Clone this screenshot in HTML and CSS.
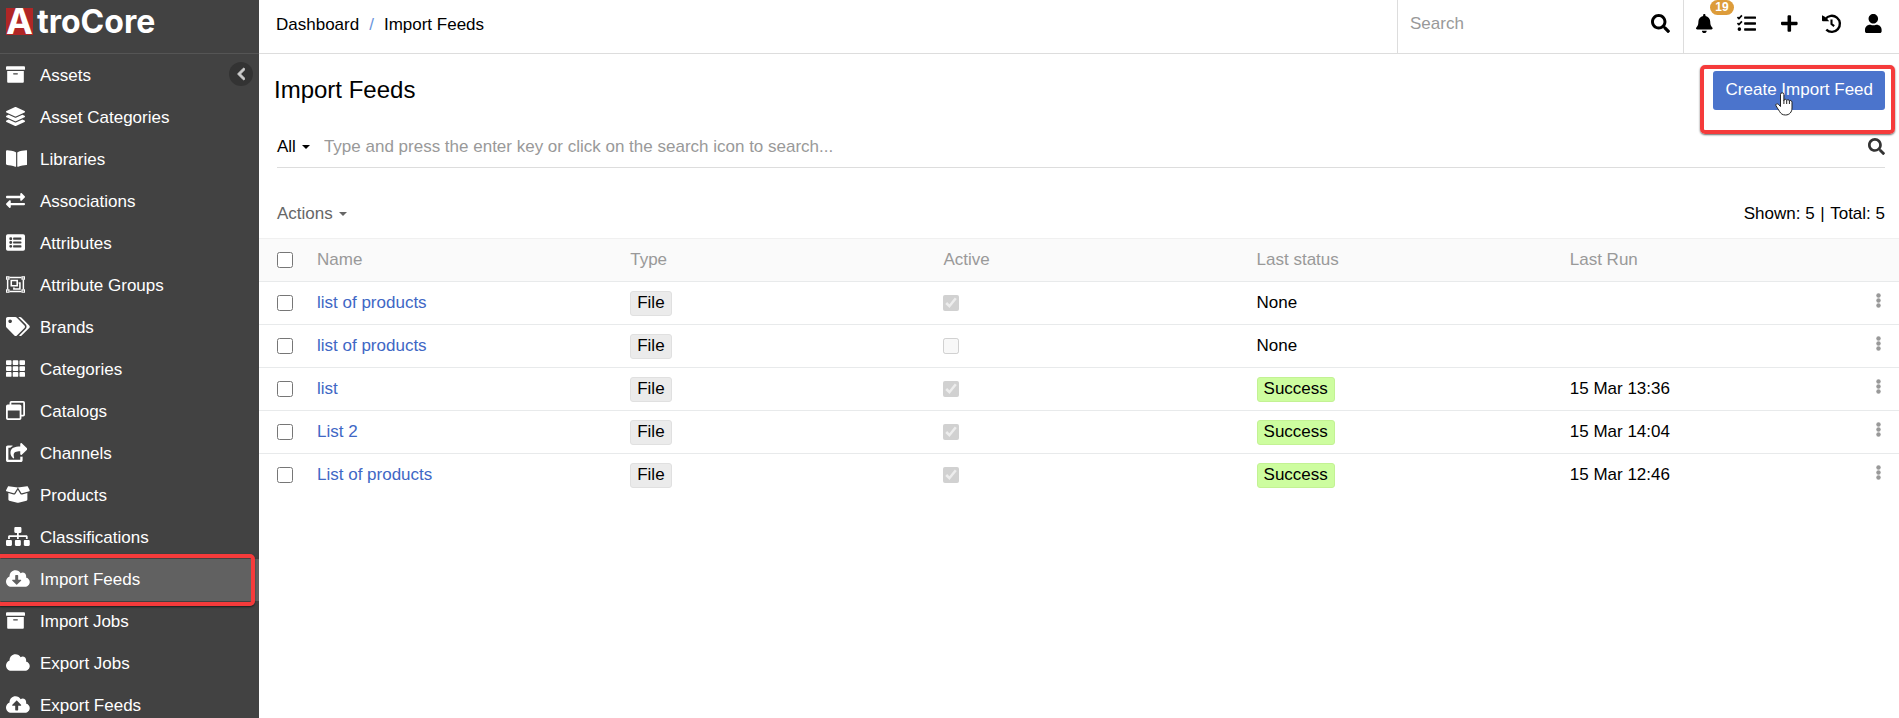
FILE: index.html
```html
<!DOCTYPE html>
<html lang="en">
<head>
    <meta charset="UTF-8">
    <meta name="viewport" content="width=device-width, initial-scale=1.0">
    <title>Import Feeds</title>
    <link rel="stylesheet" href="styles.css">
</head>
<body>
    <aside class="sidebar">
        <a class="logo" href="#"><span class="logo-mark">A</span><span class="logo-name">troCore</span></a>
        <button type="button" class="collapse" aria-label="Collapse menu">
            <svg viewBox="0 0 320 512"><path d="M34.52 239.03L228.87 44.69c9.37-9.37 24.57-9.37 33.94 0l22.67 22.67c9.36 9.36 9.37 24.52.04 33.9L131.49 256l154.02 154.75c9.34 9.38 9.32 24.54-.04 33.9l-22.67 22.67c-9.37 9.37-24.57 9.37-33.94 0L34.52 272.97c-9.37-9.37-9.37-24.57 0-33.94z"/></svg>
        </button>
        <nav class="menu">
            <a href="#"><span class="icon"><svg viewBox="0 0 512 512"><path d="M32 448c0 17.7 14.3 32 32 32h384c17.7 0 32-14.3 32-32V160H32v288zm160-212c0-6.6 5.4-12 12-12h104c6.6 0 12 5.4 12 12v8c0 6.6-5.4 12-12 12H204c-6.6 0-12-5.4-12-12v-8zM480 32H32C14.3 32 0 46.3 0 64v48c0 8.8 7.2 16 16 16h480c8.8 0 16-7.2 16-16V64c0-17.7-14.3-32-32-32z"/></svg></span>Assets</a>
            <a href="#"><span class="icon"><svg viewBox="0 0 512 512"><path d="M12.41 148.02l232.94 105.67c6.8 3.09 14.49 3.09 21.29 0l232.94-105.67c16.55-7.51 16.55-32.52 0-40.03L266.65 2.31a25.607 25.607 0 0 0-21.29 0L12.41 107.98c-16.55 7.51-16.55 32.53 0 40.04zm487.18 88.28l-58.09-26.33-161.64 73.27c-7.56 3.43-15.59 5.17-23.86 5.17s-16.29-1.74-23.86-5.17L70.51 209.97l-58.1 26.33c-16.55 7.5-16.55 32.5 0 40l232.94 105.59c6.8 3.08 14.49 3.08 21.29 0L499.59 276.3c16.55-7.5 16.55-32.5 0-40zm0 127.8l-57.87-26.23-161.86 73.37c-7.56 3.43-15.59 5.17-23.86 5.17s-16.29-1.74-23.86-5.17L70.29 337.87 12.41 364.1c-16.55 7.5-16.55 32.5 0 40l232.94 105.59c6.8 3.08 14.49 3.08 21.29 0L499.59 404.1c16.55-7.5 16.55-32.5 0-40z"/></svg></span>Asset Categories</a>
            <a href="#"><span class="icon"><svg viewBox="0 0 576 512"><path d="M542.22 32.05c-54.8 3.11-163.72 14.43-230.96 55.59-4.64 2.84-7.27 7.89-7.27 13.17v363.87c0 11.55 12.63 18.85 23.28 13.49 69.18-34.82 169.23-44.32 218.7-46.92 16.89-.89 30.02-14.43 30.02-30.66V62.75c.01-17.71-15.35-31.74-33.77-30.7zM264.73 87.64C197.5 46.48 88.58 35.17 33.78 32.05 15.36 31.01 0 45.04 0 62.75V400.6c0 16.24 13.13 29.78 30.02 30.66 49.49 2.6 149.59 12.11 218.77 46.95 10.62 5.35 23.21-1.94 23.21-13.46V100.63c0-5.29-2.62-10.14-7.27-12.99z"/></svg></span>Libraries</a>
            <a href="#"><span class="icon"><svg viewBox="0 0 512 512"><path d="M0 168v-16c0-13.255 10.745-24 24-24h360V80c0-21.367 25.899-32.042 40.971-16.971l80 80c9.372 9.373 9.372 24.569 0 33.941l-80 80C409.956 271.982 384 261.456 384 240v-48H24c-13.255 0-24-10.745-24-24zm488 152H128v-48c0-21.314-25.862-32.08-40.971-16.971l-80 80c-9.372 9.373-9.372 24.569 0 33.941l80 80C102.057 463.997 128 453.437 128 432v-48h360c13.255 0 24-10.745 24-24v-16c0-13.255-10.745-24-24-24z"/></svg></span>Associations</a>
            <a href="#"><span class="icon"><svg viewBox="0 0 512 512"><path fill-rule="evenodd" d="M48 32h416a48 48 0 0 1 48 48v352a48 48 0 0 1-48 48H48a48 48 0 0 1-48-48V80a48 48 0 0 1 48-48zM128 112a40 40 0 1 0 0 80a40 40 0 1 0 0-80zM128 216a40 40 0 1 0 0 80a40 40 0 1 0 0-80zM128 320a40 40 0 1 0 0 80a40 40 0 1 0 0-80zM204 124h200a12 12 0 0 1 12 12v32a12 12 0 0 1-12 12H204a12 12 0 0 1-12-12v-32a12 12 0 0 1 12-12zM204 228h200a12 12 0 0 1 12 12v32a12 12 0 0 1-12 12H204a12 12 0 0 1-12-12v-32a12 12 0 0 1 12-12zM204 332h200a12 12 0 0 1 12 12v32a12 12 0 0 1-12 12H204a12 12 0 0 1-12-12v-32a12 12 0 0 1 12-12z"/></svg></span>Attributes</a>
            <a href="#"><span class="icon"><svg viewBox="0 0 512 512"><path class="line" stroke-width="40" d="M96 68h320M96 444h320M44 128v256M468 128v256"/><path class="line" stroke-width="32" d="M16 48h64v64H16zM432 48h64v64h-64zM16 400h64v64H16zM432 400h64v64h-64z"/><path class="line" stroke-width="42" d="M142 148h160v144H142z"/><path d="M340 192h56v208H192v-66h42v24h120V234h-14z"/></svg></span>Attribute Groups</a>
            <a href="#"><span class="icon"><svg viewBox="0 0 640 512"><path d="M497.941 225.941L286.059 14.059A48 48 0 0 0 252.118 0H48C21.49 0 0 21.49 0 48v204.118a48 48 0 0 0 14.059 33.941l211.882 211.882c18.744 18.745 49.136 18.746 67.882 0l204.118-204.118c18.745-18.745 18.745-49.137 0-67.882zM112 160c-26.51 0-48-21.49-48-48s21.49-48 48-48 48 21.49 48 48-21.49 48-48 48zm513.941 133.823L421.823 497.941c-18.745 18.745-49.137 18.745-67.882 0l-.36-.36L527.64 323.522c16.999-16.999 26.36-39.6 26.36-63.64s-9.362-46.641-26.36-63.64L331.397 0h48.721a48 48 0 0 1 33.941 14.059l211.882 211.882c18.745 18.745 18.745 49.137 0 67.882z"/></svg></span>Brands</a>
            <a href="#"><span class="icon"><svg viewBox="0 0 512 512"><path d="M24 32h101a24 24 0 0 1 24 24v80a24 24 0 0 1-24 24H24a24 24 0 0 1-24-24V56a24 24 0 0 1 24-24zM205 32h102a24 24 0 0 1 24 24v80a24 24 0 0 1-24 24H205a24 24 0 0 1-24-24V56a24 24 0 0 1 24-24zM387 32h101a24 24 0 0 1 24 24v80a24 24 0 0 1-24 24H387a24 24 0 0 1-24-24V56a24 24 0 0 1 24-24zM24 192h101a24 24 0 0 1 24 24v80a24 24 0 0 1-24 24H24a24 24 0 0 1-24-24v-80a24 24 0 0 1 24-24zM205 192h102a24 24 0 0 1 24 24v80a24 24 0 0 1-24 24H205a24 24 0 0 1-24-24v-80a24 24 0 0 1 24-24zM387 192h101a24 24 0 0 1 24 24v80a24 24 0 0 1-24 24H387a24 24 0 0 1-24-24v-80a24 24 0 0 1 24-24zM24 352h101a24 24 0 0 1 24 24v80a24 24 0 0 1-24 24H24a24 24 0 0 1-24-24v-80a24 24 0 0 1 24-24zM205 352h102a24 24 0 0 1 24 24v80a24 24 0 0 1-24 24H205a24 24 0 0 1-24-24v-80a24 24 0 0 1 24-24zM387 352h101a24 24 0 0 1 24 24v80a24 24 0 0 1-24 24H387a24 24 0 0 1-24-24v-80a24 24 0 0 1 24-24z"/></svg></span>Categories</a>
            <a href="#"><span class="icon"><svg viewBox="0 0 512 512"><path fill-rule="evenodd" d="M144 0h320a48 48 0 0 1 48 48v320a48 48 0 0 1-48 48h-48v-48h48V48H144v48H96V48a48 48 0 0 1 48-48zM48 96h320a48 48 0 0 1 48 48v320a48 48 0 0 1-48 48H48a48 48 0 0 1-48-48V144a48 48 0 0 1 48-48zM48 256v208h320V256z"/></svg></span>Catalogs</a>
            <a href="#"><span class="icon"><svg viewBox="0 0 576 512"><path d="M568.482 177.448L424.479 313.433C409.3 327.768 384 317.14 384 295.985v-71.963c-144.575.97-205.566 35.113-164.775 171.353 4.483 14.973-12.846 26.567-25.006 17.33C155.252 383.105 120 326.488 120 269.339c0-143.937 117.599-172.5 264-173.312V24.012c0-21.174 25.317-31.768 40.479-17.448l144.003 135.988c10.02 9.463 10.028 25.425 0 34.896zM384 379.128V448H64V128h50.916a11.99 11.99 0 0 0 8.648-3.693c14.953-15.568 32.237-27.89 51.014-37.676C185.708 80.83 181.584 64 169.033 64H48C21.49 64 0 85.49 0 112v352c0 26.51 21.49 48 48 48h352c26.51 0 48-21.49 48-48v-88.806c0-8.288-8.197-14.066-16.011-11.302a71.83 71.83 0 0 1-34.189 3.377c-7.27-1.046-13.8 4.514-13.8 11.859z"/></svg></span>Channels</a>
            <a href="#"><span class="icon"><svg viewBox="0 0 640 512"><path d="M425.7 256c-16.9 0-32.8-9-41.4-23.4L320 126l-64.2 106.6c-8.7 14.5-24.6 23.5-41.5 23.5-4.5 0-9-.6-13.3-1.9L64 215v178c0 14.7 10 27.5 24.2 31l216.2 54.1c10.2 2.5 20.9 2.5 31 0L551.8 424c14.2-3.6 24.2-16.4 24.2-31V215l-137 39.1c-4.3 1.3-8.8 1.9-13.3 1.9zm212.6-112.2L586.8 41c-3.1-6.2-9.8-9.8-16.7-8.9L320 64l91.7 152.1c3.8 6.3 11.4 9.3 18.5 7.3l197.9-56.5c9.9-2.9 14.7-13.9 10.2-23.1zM53.2 41L1.7 143.8c-4.6 9.2.3 20.2 10.1 23l197.9 56.5c7.1 2 14.7-1 18.5-7.3L320 64 69.8 32.1c-6.9-.8-13.5 2.7-16.6 8.9z"/></svg></span>Products</a>
            <a href="#"><span class="icon"><svg viewBox="0 0 640 512"><path d="M128 352H32c-17.67 0-32 14.33-32 32v96c0 17.67 14.33 32 32 32h96c17.67 0 32-14.33 32-32v-96c0-17.67-14.33-32-32-32zm-24-80h192v48h48v-48h192v48h48v-57.59c0-21.17-17.23-38.41-38.41-38.41H344v-64h40c17.67 0 32-14.33 32-32V32c0-17.67-14.33-32-32-32H256c-17.67 0-32 14.33-32 32v96c0 17.67 14.33 32 32 32h40v64H94.41C73.23 224 56 241.23 56 262.41V320h48v-48zm264 80h-96c-17.67 0-32 14.33-32 32v96c0 17.67 14.33 32 32 32h96c17.67 0 32-14.33 32-32v-96c0-17.67-14.33-32-32-32zm240 0h-96c-17.67 0-32 14.33-32 32v96c0 17.67 14.33 32 32 32h96c17.67 0 32-14.33 32-32v-96c0-17.67-14.33-32-32-32z"/></svg></span>Classifications</a>
            <a href="#" class="active"><span class="icon"><svg viewBox="0 0 640 512"><path fill-rule="evenodd" d="M537.6 226.6c4.1-10.7 6.4-22.4 6.4-34.6 0-53-43-96-96-96-19.7 0-38.1 6-53.3 16.2C367 64.2 315.3 32 256 32c-88.4 0-160 71.6-160 160 0 2.7.1 5.4.2 8.1C40.2 219.8 0 273.2 0 336c0 79.5 64.5 144 144 144h368c70.7 0 128-57.3 128-128 0-61.9-44-113.6-102.4-125.4zm-132.9 88.7L299.3 420.7c-6.2 6.2-16.4 6.2-22.6 0L171.3 315.3c-10.1-10.1-2.9-27.3 11.3-27.3H248V176c0-8.8 7.2-16 16-16h48c8.8 0 16 7.2 16 16v112h65.4c14.2 0 21.4 17.2 11.3 27.3z"/></svg></span>Import Feeds<span class="highlight"></span></a>
            <a href="#"><span class="icon"><svg viewBox="0 0 512 512"><path d="M32 448c0 17.7 14.3 32 32 32h384c17.7 0 32-14.3 32-32V160H32v288zm160-212c0-6.6 5.4-12 12-12h104c6.6 0 12 5.4 12 12v8c0 6.6-5.4 12-12 12H204c-6.6 0-12-5.4-12-12v-8zM480 32H32C14.3 32 0 46.3 0 64v48c0 8.8 7.2 16 16 16h480c8.8 0 16-7.2 16-16V64c0-17.7-14.3-32-32-32z"/></svg></span>Import Jobs</a>
            <a href="#"><span class="icon"><svg viewBox="0 0 640 512"><path d="M537.6 226.6c4.1-10.7 6.4-22.4 6.4-34.6 0-53-43-96-96-96-19.7 0-38.1 6-53.3 16.2C367 64.2 315.3 32 256 32c-88.4 0-160 71.6-160 160 0 2.7.1 5.4.2 8.1C40.2 219.8 0 273.2 0 336c0 79.5 64.5 144 144 144h368c70.7 0 128-57.3 128-128 0-61.9-44-113.6-102.4-125.4z"/></svg></span>Export Jobs</a>
            <a href="#"><span class="icon"><svg viewBox="0 0 640 512"><path fill-rule="evenodd" d="M537.6 226.6c4.1-10.7 6.4-22.4 6.4-34.6 0-53-43-96-96-96-19.7 0-38.1 6-53.3 16.2C367 64.2 315.3 32 256 32c-88.4 0-160 71.6-160 160 0 2.7.1 5.4.2 8.1C40.2 219.8 0 273.2 0 336c0 79.5 64.5 144 144 144h368c70.7 0 128-57.3 128-128 0-61.9-44-113.6-102.4-125.4zM393.4 288H328v112c0 8.8-7.2 16-16 16h-48c-8.8 0-16-7.2-16-16V288h-65.4c-14.3 0-21.4-17.2-11.3-27.3l105.4-105.4c6.2-6.2 16.4-6.2 22.6 0l105.4 105.4c10.1 10.1 2.9 27.3-11.3 27.3z"/></svg></span>Export Feeds</a>
        </nav>
    </aside>

    <div class="page">
        <header class="topbar">
            <nav class="breadcrumb">
                <a href="#">Dashboard</a><span class="slash">/</span><a href="#">Import Feeds</a>
            </nav>
            <form class="global-search">
                <input type="text" placeholder="Search" aria-label="Search">
                <button type="button" class="icon-btn" aria-label="Search"><svg viewBox="0 0 512 512"><path d="M505 442.7L405.3 343c-4.5-4.5-10.6-7-17-7H372c27.6-35.3 44-79.7 44-128C416 93.1 322.9 0 208 0S0 93.1 0 208s93.1 208 208 208c48.3 0 92.7-16.4 128-44v16.3c0 6.4 2.5 12.5 7 17l99.7 99.7c9.4 9.4 24.6 9.4 33.9 0l28.3-28.3c9.4-9.4 9.4-24.6.1-34zM208 336c-70.7 0-128-57.2-128-128 0-70.7 57.2-128 128-128 70.7 0 128 57.2 128 128 0 70.7-57.2 128-128 128z"/></svg></button>
            </form>
            <div class="tools">
                <button type="button" class="icon-btn" aria-label="Notifications"><svg viewBox="0 0 448 512"><path d="M224 512c35.32 0 63.97-28.65 63.97-64H160.03c0 35.35 28.65 64 63.97 64zm215.39-149.71c-19.32-20.76-55.47-51.99-55.47-154.29 0-77.7-54.48-139.9-127.94-155.16V32c0-17.67-14.32-32-31.98-32s-31.98 14.33-31.98 32v20.84C118.56 68.1 64.08 130.3 64.08 208c0 102.3-36.15 133.53-55.47 154.29-6 6.45-8.66 14.16-8.61 21.71.11 16.4 12.98 32 32.1 32h383.8c19.12 0 32-15.6 32.1-32 .05-7.55-2.61-15.27-8.61-21.71z"/></svg><span class="badge">19</span></button>
                <button type="button" class="icon-btn" aria-label="Tasks"><svg viewBox="0 0 512 512"><path d="M208 64h288a16 16 0 0 1 16 16v32a16 16 0 0 1-16 16H208a16 16 0 0 1-16-16V80a16 16 0 0 1 16-16zM208 224h288a16 16 0 0 1 16 16v32a16 16 0 0 1-16 16H208a16 16 0 0 1-16-16v-32a16 16 0 0 1 16-16zM208 384h288a16 16 0 0 1 16 16v32a16 16 0 0 1-16 16H208a16 16 0 0 1-16-16v-32a16 16 0 0 1 16-16zM64 360a48 48 0 1 0 0 96a48 48 0 1 0 0-96z"/><path class="line" stroke-width="46" d="M12 86l40 38 80-86M12 246l40 38 80-86"/></svg></button>
                <button type="button" class="icon-btn" aria-label="Create"><svg viewBox="0 0 448 512"><path d="M416 208H272V64c0-17.67-14.33-32-32-32h-32c-17.67 0-32 14.33-32 32v144H32c-17.67 0-32 14.33-32 32v32c0 17.67 14.33 32 32 32h144v144c0 17.67 14.33 32 32 32h32c17.67 0 32-14.33 32-32V304h144c17.67 0 32-14.33 32-32v-32c0-17.67-14.33-32-32-32z"/></svg></button>
                <button type="button" class="icon-btn" aria-label="History"><svg viewBox="0 0 512 512"><path d="M0 32L64 66l72 60 60 66H24a24 24 0 0 1-24-24z"/><path class="line" stroke-width="64" d="M92 136a216 216 0 1 1 24 284"/><path class="line" stroke-width="56" d="M256 148v120l72 60"/></svg></button>
                <button type="button" class="icon-btn" aria-label="Account"><svg viewBox="0 0 448 512"><path d="M224 256c70.7 0 128-57.3 128-128S294.7 0 224 0 96 57.3 96 128s57.3 128 128 128zm89.6 32h-16.7c-22.2 10.2-46.9 16-72.9 16s-50.6-5.8-72.9-16h-16.7C60.2 288 0 348.2 0 422.4V464c0 26.5 21.5 48 48 48h352c26.5 0 48-21.5 48-48v-41.6c0-74.2-60.2-134.4-134.4-134.4z"/></svg></button>
            </div>
        </header>

        <main>
            <div class="page-header">
                <h1>Import Feeds</h1>
                <div class="create">
                    <button type="button" class="btn-primary">Create Import Feed</button>
                    <span class="highlight"></span>
                    <svg class="pointer" viewBox="0 0 18 24"><path d="M5.5 12V2.5a1.7 1.7 0 0 1 3.4 0V8.5c.3-1.7 2.7-1.5 2.8 0c.5-1.2 2.6-1 2.7.5c.6-1 2.6-.6 2.6 1.2V16c0 4-2.5 7-6.5 7c-3 0-4.6-1.2-6-3.6L1 13.8c-.8-1.6 1-2.7 2.3-1.5l2.2 2.2z"/><path d="M8.9 8v4M11.7 8.5V12M14.4 9v3"/></svg>
                </div>
            </div>

            <form class="filter">
                <button type="button" class="dropdown">All <span class="caret"></span></button>
                <input type="text" placeholder="Type and press the enter key or click on the search icon to search..." aria-label="Search import feeds">
                <button type="button" class="icon-btn small" aria-label="Search"><svg viewBox="0 0 512 512"><path d="M505 442.7L405.3 343c-4.5-4.5-10.6-7-17-7H372c27.6-35.3 44-79.7 44-128C416 93.1 322.9 0 208 0S0 93.1 0 208s93.1 208 208 208c48.3 0 92.7-16.4 128-44v16.3c0 6.4 2.5 12.5 7 17l99.7 99.7c9.4 9.4 24.6 9.4 33.9 0l28.3-28.3c9.4-9.4 9.4-24.6.1-34zM208 336c-70.7 0-128-57.2-128-128 0-70.7 57.2-128 128-128 70.7 0 128 57.2 128 128 0 70.7-57.2 128-128 128z"/></svg></button>
            </form>

            <div class="list-bar">
                <button type="button" class="dropdown muted">Actions <span class="caret"></span></button>
                <div>Shown: 5 <span class="divider">|</span> Total: 5</div>
            </div>

            <table>
                <thead>
                    <tr>
                        <th class="check"><input type="checkbox" aria-label="Select all"></th>
                        <th>Name</th>
                        <th>Type</th>
                        <th>Active</th>
                        <th>Last status</th>
                        <th>Last Run</th>
                        <th class="more"></th>
                    </tr>
                </thead>
                <tbody>
                    <tr>
                        <td class="check"><input type="checkbox" aria-label="Select row"></td>
                        <td><a href="#">list of products</a></td>
                        <td><span class="label">File</span></td>
                        <td><input type="checkbox" aria-label="Active" checked disabled></td>
                        <td>None</td>
                        <td></td>
                        <td class="more"><button type="button" aria-label="Row menu"><svg viewBox="0 0 5 15"><circle cx="2.5" cy="2.5" r="2.2"/><circle cx="2.5" cy="7.5" r="2.2"/><circle cx="2.5" cy="12.5" r="2.2"/></svg></button></td>
                    </tr>
                    <tr>
                        <td class="check"><input type="checkbox" aria-label="Select row"></td>
                        <td><a href="#">list of products</a></td>
                        <td><span class="label">File</span></td>
                        <td><input type="checkbox" aria-label="Active" disabled></td>
                        <td>None</td>
                        <td></td>
                        <td class="more"><button type="button" aria-label="Row menu"><svg viewBox="0 0 5 15"><circle cx="2.5" cy="2.5" r="2.2"/><circle cx="2.5" cy="7.5" r="2.2"/><circle cx="2.5" cy="12.5" r="2.2"/></svg></button></td>
                    </tr>
                    <tr>
                        <td class="check"><input type="checkbox" aria-label="Select row"></td>
                        <td><a href="#">list</a></td>
                        <td><span class="label">File</span></td>
                        <td><input type="checkbox" aria-label="Active" checked disabled></td>
                        <td><span class="label success">Success</span></td>
                        <td>15 Mar 13:36</td>
                        <td class="more"><button type="button" aria-label="Row menu"><svg viewBox="0 0 5 15"><circle cx="2.5" cy="2.5" r="2.2"/><circle cx="2.5" cy="7.5" r="2.2"/><circle cx="2.5" cy="12.5" r="2.2"/></svg></button></td>
                    </tr>
                    <tr>
                        <td class="check"><input type="checkbox" aria-label="Select row"></td>
                        <td><a href="#">List 2</a></td>
                        <td><span class="label">File</span></td>
                        <td><input type="checkbox" aria-label="Active" checked disabled></td>
                        <td><span class="label success">Success</span></td>
                        <td>15 Mar 14:04</td>
                        <td class="more"><button type="button" aria-label="Row menu"><svg viewBox="0 0 5 15"><circle cx="2.5" cy="2.5" r="2.2"/><circle cx="2.5" cy="7.5" r="2.2"/><circle cx="2.5" cy="12.5" r="2.2"/></svg></button></td>
                    </tr>
                    <tr>
                        <td class="check"><input type="checkbox" aria-label="Select row"></td>
                        <td><a href="#">List of products</a></td>
                        <td><span class="label">File</span></td>
                        <td><input type="checkbox" aria-label="Active" checked disabled></td>
                        <td><span class="label success">Success</span></td>
                        <td>15 Mar 12:46</td>
                        <td class="more"><button type="button" aria-label="Row menu"><svg viewBox="0 0 5 15"><circle cx="2.5" cy="2.5" r="2.2"/><circle cx="2.5" cy="7.5" r="2.2"/><circle cx="2.5" cy="12.5" r="2.2"/></svg></button></td>
                    </tr>
                </tbody>
            </table>
        </main>
    </div>
</body>
</html>
```

FILE: styles.css
```css
* {
    box-sizing: border-box;
}
body {
    display: flex;
    height: 100vh;
    margin: 0;
    overflow: hidden;
    font-family: "Liberation Sans", Arial, sans-serif;
    font-size: 17px;
    line-height: 24px;
    color: #000;
    background: #fff;
}
a {
    color: inherit;
    text-decoration: none;
}
button, input {
    font: inherit;
    color: inherit;
    margin: 0;
}
button {
    padding: 0;
    border: none;
    background: none;
    cursor: pointer;
}
svg {
    display: block;
    fill: currentColor;
}

/* Sidebar */
.sidebar {
    position: relative;
    flex: 0 0 259px;
    overflow: hidden;
    background: #424242;
    color: #fff;
}
.logo {
    display: flex;
    gap: 4px;
    height: 54px;
    padding: 8px 6px;
    border-bottom: 1px solid #555;
    font-family: Inter, "Open Sans", sans-serif;
    font-size: 32px;
    font-weight: 700;
    line-height: 28px;
}
.logo-mark {
    width: 27px;
    height: 27px;
    background: #b02626;
    font-size: 36px;
    line-height: 27px;
    text-align: center;
}
.collapse {
    position: absolute;
    top: 62px;
    right: 6px;
    width: 24px;
    height: 24px;
    border-radius: 50%;
    background: #333;
    color: #ccc;
}
.collapse svg {
    height: 14px;
    margin: 0 auto;
    stroke: currentColor;
    stroke-width: 30;
}
.menu {
    padding-top: 1px;
}
.menu a {
    position: relative;
    display: flex;
    align-items: center;
    height: 42px;
    padding: 0 6px 1px;
}
.menu a.active {
    background: #616161;
}
.icon {
    width: 34px;
    padding-bottom: 3px;
}
.icon svg {
    height: 19px;
}
.highlight {
    position: absolute;
    border: 4px solid #f53b3b;
    border-radius: 5px;
    box-shadow: 0 1px 2px rgba(0, 0, 0, 0.6);
    pointer-events: none;
}
.menu .highlight {
    inset: -5px 4px -5px -4px;
}

/* Top bar */
.page {
    flex: 1;
    min-width: 0;
}
.topbar {
    display: flex;
    height: 54px;
    border-bottom: 1px solid #ddd;
}
.breadcrumb {
    flex: 1;
    padding: 13px 17px;
}
.slash {
    margin: 0 10px;
    color: #6a95dd;
}
.global-search {
    display: flex;
    align-items: center;
    width: 286px;
    padding: 0 13px 6px 12px;
    border-left: 1px solid #ddd;
}
input[type="text"] {
    flex: 1;
    min-width: 0;
    padding: 0;
    border: none;
    outline: none;
    background: none;
}
::placeholder {
    color: #999;
    opacity: 1;
}
.icon-btn {
    position: relative;
}
.icon-btn svg {
    height: 19px;
    overflow: visible;
}
.icon-btn.small {
    color: #333;
}
.icon-btn.small svg {
    height: 17px;
}
.line {
    fill: none;
    stroke: currentColor;
}
.tools {
    display: flex;
    align-items: center;
    justify-content: space-between;
    width: 216px;
    padding: 0 17px 6px 12px;
    border-left: 1px solid #ddd;
}
.badge {
    position: absolute;
    top: -14px;
    left: 14px;
    width: 24px;
    height: 15px;
    border-radius: 8px;
    background: #dd9c3a;
    color: #fff;
    font-size: 12px;
    font-weight: bold;
    line-height: 15px;
}

/* Page header */
.page-header {
    display: flex;
    justify-content: space-between;
    padding: 17px 14px 0 15px;
}
h1 {
    margin: 0;
    font-size: 24px;
    font-weight: normal;
    line-height: 37px;
}
.create {
    position: relative;
}
.btn-primary {
    height: 39px;
    padding: 0 12px 2px 13px;
    border-radius: 3px;
    background: #4b74cc;
    color: #fff;
}
.create .highlight {
    inset: -6px -10px -24px -13px;
}
.pointer {
    position: absolute;
    top: 21px;
    left: 62px;
    width: 18px;
    height: 24px;
    fill: #fff;
    stroke: #222;
}

/* Filter and list bar */
.filter {
    display: flex;
    align-items: center;
    gap: 14px;
    height: 45px;
    margin: 13px 14px 0 18px;
    padding-top: 3px;
    border-bottom: 1px solid #ddd;
}
.dropdown {
    display: flex;
    align-items: center;
    gap: 6px;
}
.caret {
    border: 4px solid transparent;
    border-top-color: currentColor;
    border-bottom: none;
}
.list-bar {
    display: flex;
    align-items: center;
    justify-content: space-between;
    height: 70px;
    padding: 22px 14px 0 18px;
}
.muted {
    color: #666;
}
.divider {
    margin: 0 1px;
}

/* List */
table {
    width: 100%;
    table-layout: fixed;
    border-collapse: collapse;
}
th, td {
    height: 43px;
    padding: 0 10px;
    border-bottom: 1px solid #e8eaeb;
    text-align: left;
    font-weight: normal;
}
th {
    border-top: 1px solid #f0f0f0;
    background: #fafafa;
    color: #999;
}
tbody tr:last-child td {
    border-bottom: none;
}
td a {
    color: #4067c5;
}
.check {
    width: 48px;
    padding-left: 18px;
}
.more {
    width: 26px;
    padding: 0;
    color: #999;
}
.more svg {
    width: 5px;
    height: 15px;
    margin-left: 3px;
}
input[type="checkbox"] {
    display: block;
    width: 16px;
    height: 16px;
}
.label {
    display: inline-block;
    padding: 0 6px 2px;
    border: 1px solid #e0e0e0;
    border-radius: 3px;
    background: #ebebeb;
    line-height: 21px;
    vertical-align: top;
}
.label.success {
    border-color: #c3f294;
    background: #cdfd9f;
}
```
